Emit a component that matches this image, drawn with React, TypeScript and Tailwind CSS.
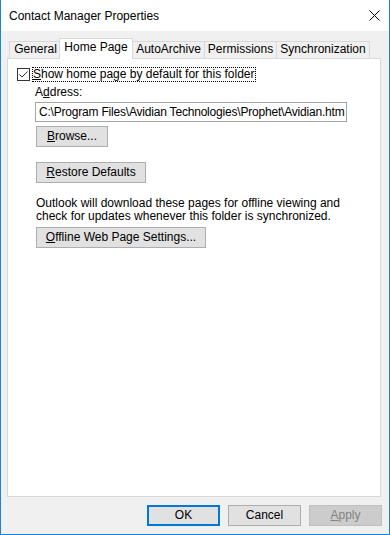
import React from "react";

function Btn({
  children,
  w,
  variant = "normal",
}: {
  children: React.ReactNode;
  w: string;
  variant?: "normal" | "default" | "disabled";
}) {
  const base = "h-[21px] flex items-center justify-center leading-[15px] shrink-0";
  const cls =
    variant === "default"
      ? "border-2 border-[#0078d7] bg-[#e1e1e1] text-black"
      : variant === "disabled"
      ? "border border-[#bfbfbf] bg-[#cccccc] text-[#838383]"
      : "border border-[#adadad] bg-[#e1e1e1] text-black";
  return <div className={`${base} ${cls} ${w}`}>{children}</div>;
}

function Tab({ label, w, first }: { label: string; w: string; first?: boolean }) {
  return (
    <div
      className={`${first ? "" : "-ml-px"} ${w} mt-[3px] h-[17px] border border-b-0 border-[#d9d9d9] bg-[#f0f0f0] flex justify-center leading-[15px] shrink-0`}
    >
      {label}
    </div>
  );
}

export default function App() {
  return (
    <div className="w-[390px] h-[535px] bg-[#f0f0f0] border-x border-b border-[#1883d7] flex flex-col font-['Liberation_Sans',Arial,sans-serif] text-[12px] text-black overflow-hidden">
      {/* Title bar */}
      <div className="h-[31px] bg-white flex items-center justify-between pl-[8px] pr-[9px] shrink-0">
        <span className="leading-[16px]">Contact Manager Properties</span>
        <svg width="11" height="11" viewBox="0 0 11 11" className="mb-[1px]">
          <path d="M0.5 0.5 L10.5 10.5 M10.5 0.5 L0.5 10.5" stroke="#000" strokeWidth="1" fill="none" />
        </svg>
      </div>

      {/* Body */}
      <div className="flex flex-col pl-[6px] pt-[7px]">
        {/* Tabs */}
        <div className="relative z-10 flex items-start h-[20px] pl-[2px]">
          <Tab label="General" w="w-[53px]" first />
          <div className="-ml-[3px] w-[74px] h-[21px] border border-b-0 border-[#d9d9d9] bg-white flex justify-center pt-[1px] leading-[15px] shrink-0">
            Home Page
          </div>
          <Tab label="AutoArchive" w="w-[73px]" />
          <Tab label="Permissions" w="w-[73px]" />
          <Tab label="Synchronization" w="w-[94px]" />
        </div>

        {/* Panel */}
        <div className="w-[374px] h-[439px] border border-[#d9d9d9] bg-white flex flex-col pl-[9px]">
          <div className="mt-[8px] flex items-center h-[15px]">
            <div className="w-[13px] h-[13px] border border-[#333333] bg-white flex items-center justify-center">
              <svg width="11" height="11" viewBox="0 0 11 11">
                <path d="M1.5 5.5 L4 8 L9.5 2.5" stroke="#333" strokeWidth="1" fill="none" />
              </svg>
            </div>
            <div className="ml-[2px] h-[15px] border border-dotted border-black leading-[13px] pr-[1px]">
              <span className="underline">S</span>how home page by default for this folder
            </div>
          </div>

          <div className="ml-[18px] flex flex-col items-start">
            <div className="mt-[3px] leading-[15px]">
              A<span className="underline">d</span>dress:
            </div>
            <div className="mt-[2px] w-[312px] h-[20px] border border-[#a5a5a5] bg-white pl-[3px] leading-[18px] whitespace-nowrap overflow-hidden tracking-[-0.2px]">
              C:\Program Files\Avidian Technologies\Prophet\Avidian.htm
            </div>
            <div className="ml-[1px] mt-[4px]">
              <Btn w="w-[72px]">
                <span>
                  <span className="underline">B</span>rowse...
                </span>
              </Btn>
            </div>
            <div className="ml-[1px] mt-[15px]">
              <Btn w="w-[110px]">
                <span>
                  <span className="underline">R</span>estore Defaults
                </span>
              </Btn>
            </div>
            <div className="ml-[1px] mt-[14px] leading-[13px] whitespace-nowrap">
              Outlook will download these pages for offline viewing and
              <br />
              check for updates whenever this folder is synchronized.
            </div>
            <div className="ml-[1px] mt-[4px]">
              <Btn w="w-[170px]">
                <span>
                  <span className="underline">O</span>ffline Web Page Settings...
                </span>
              </Btn>
            </div>
          </div>
        </div>

        {/* Footer */}
        <div className="mt-[8px] flex justify-end gap-[8px] pr-[7px]">
          <Btn w="w-[73px]" variant="default">
            OK
          </Btn>
          <Btn w="w-[73px]">Cancel</Btn>
          <Btn w="w-[73px]" variant="disabled">
            <span>
              <span className="underline">A</span>pply
            </span>
          </Btn>
        </div>
      </div>
    </div>
  );
}
